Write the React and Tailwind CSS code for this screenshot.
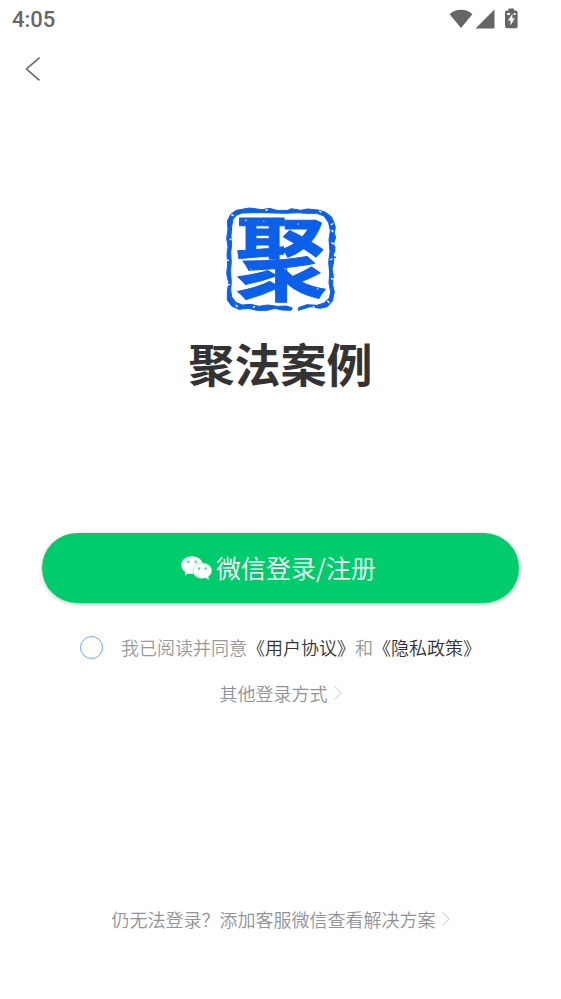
import React, { useState } from 'react';

const StatusIcons = () => (
  <svg className="w-[70px] h-6 text-[#666666]" viewBox="0 0 70 24" fill="currentColor" aria-hidden="true">
    {/* wifi */}
    <path d="M12 22 L0.6 8.2 C3.8 5.3 7.7 3.8 12 3.8 C16.3 3.8 20.2 5.3 23.4 8.2 Z" />
    {/* signal */}
    <path d="M45.5 3.5 V22.5 H26.5 Z" />
    {/* battery */}
    <path
      fillRule="evenodd"
      d="M59.5 2.5 H65 V4.5 H66.6 Q68.6 4.5 68.6 6.5 V20.3 Q68.6 22.3 66.6 22.3 H58 Q56 22.3 56 20.3 V6.5 Q56 4.5 58 4.5 H59.5 Z M63.4 8 L58.8 14.5 H61.5 V19.5 L65.9 12.3 H63.3 Z M58 7 V9 H60.5 L61.5 7 Z M64.8 7 L64.4 9 H66.6 V7 Z"
    />
  </svg>
);

const SealLogo = () => (
  <svg className="w-[130px] h-[120px] overflow-visible" viewBox="0 0 130 120" role="img" aria-label="聚法案例">
    <text
      x="65"
      y="93"
      textAnchor="middle"
      fontSize="92"
      fontWeight="700"
      fill="#0b5fe8"
      stroke="#0b5fe8"
      strokeWidth="1"
      strokeLinejoin="round"
      fontFamily="'Noto Sans CJK SC', sans-serif"
    >
      聚
    </text>
    <g transform="scale(0.33333)">
      {/* worn border of the stamp */}
      <path
        fill="#0b5fe8"
        stroke="#0b5fe8"
        strokeWidth="3"
        strokeLinejoin="round"
        fillRule="evenodd"
        d="M78 28 L100 24 L138 29 L160 25 L186 32 L216 31 L226 26 L254 31 L274 27 L306 30 L327 36 L346 50 L354 68 L358 82 L355 98 L359 113 L353 129 L357 151 L352 164 L353 186 L348 207 L352 228 L349 252 L355 275 L349 303 L334 320 L312 325 L283 320 L247 331 L247 323 L273 314 L303 316 L325 309 L340 294 L344 276 L339 249 L341 219 L338 187 L342 154 L339 119 L343 92 L338 68 L324 48 L303 40 L273 40 L246 38 L208 40 L177 39 L141 38 L106 38 L79 39 L62 45 L51 58 L47 79 L45 109 L47 133 L44 158 L46 187 L43 215 L46 244 L44 269 L47 290 L59 307 L79 315 L105 313 L129 319 L155 315 L184 319 L211 318 L229 324 L225 331 L197 330 L177 325 L153 331 L122 331 L98 325 L69 328 L47 318 L34 300 L34 275 L38 248 L32 221 L35 193 L33 164 L36 141 L32 115 L36 88 L34 63 L45 42 L61 31 Z"
      />
      {/* chips in the ink */}
      <g fill="none" stroke="#ffffff" strokeWidth="4" strokeLinecap="round">
        <path d="M47 44 L52 47 M42 117 L45 119 M34 180 L37 182 M37 255 L40 253 M60 316 L64 320 M112 322 L115 320 M292 320 L295 325 M335 303 L339 308 M346 236 L352 238 M344 179 L348 177 M348 128 L352 132 M347 91 L351 95 M346 74 L350 71 M311 34 L315 36 M150 31 L154 29" />
        <path
          strokeWidth="3"
          d="M88 62 L92 60 M143 64 L144 64 M246 72 L247 72 M105 207 L106 208 M207 205 L208 207 M304 266 L306 267"
        />
      </g>
      <g fill="#0b5fe8">
        <circle cx="357" cy="172" r="3" />
        <circle cx="357" cy="142" r="2" />
      </g>
    </g>
  </svg>
);

const WechatIcon = () => (
  <svg className="w-[31px] h-6" viewBox="0 0 31 24" aria-hidden="true">
    <path
      fill="#ffffff"
      d="M11 0.2 C5 0.2 0.3 4.1 0.3 9 C0.3 11.9 1.9 14.4 4.4 16.1 L3.7 19.6 L7.5 17.5 C8.7 17.8 9.8 18 11 18 C17.1 18 21.8 14 21.8 9 C21.8 4.1 17.1 0.2 11 0.2 Z"
    />
    <path
      fill="#ffffff"
      stroke="#7ee5b4"
      strokeWidth="0.7"
      d="M21 7 C15.8 7 11.9 10.3 11.9 14.7 C11.9 19 15.8 22.3 21 22.3 C22.2 22.3 23.3 22.1 24.3 21.8 L28 23.7 L27.2 20.5 C29.4 19.2 30.7 17.1 30.7 14.7 C30.7 10.3 26.3 7 21 7 Z"
    />
    <g fill="#5bdda0">
      <circle cx="7.4" cy="5.8" r="1.4" />
      <circle cx="14.8" cy="5.8" r="1.4" />
      <circle cx="18" cy="12.6" r="1.3" />
      <circle cx="24.6" cy="12.6" r="1.3" />
    </g>
  </svg>
);

const ArrowRight = () => (
  <svg className="w-2 h-4" viewBox="0 0 8 16" fill="none" stroke="#dcdcdf" strokeWidth="1.2" aria-hidden="true">
    <path d="M0.7 1.5 L7.2 8 L0.7 14.5" />
  </svg>
);

const App = () => {
  const [agreed, setAgreed] = useState(false);

  return (
    <div className="min-h-screen flex flex-col bg-white font-['Noto_Sans_CJK_SC',sans-serif] font-[350]">
      {/* Status bar */}
      <div className="h-10 pl-3 pr-[42px] flex items-center justify-between">
        <span className="font-[Roboto] font-medium text-[22px] leading-6 text-[#666666]">4:05</span>
        <div className="pb-1">
          <StatusIcons />
        </div>
      </div>

      <header className="h-14 px-3 pt-px flex items-center">
        <button type="button" aria-label="返回" className="w-[42px] h-10 flex items-center justify-center">
          <svg className="w-4 h-6" viewBox="0 0 16 24" fill="none" stroke="#666666" strokeWidth="1.6">
            <path d="M14.5 0.7 L1.5 12 L14.5 23.3" />
          </svg>
        </button>
      </header>

      <main className="flex-1 flex flex-col items-center px-[42px]">
        <div className="pt-26 flex flex-col items-center">
          <SealLogo />
          <h1 className="mt-3 text-[46px] leading-15 font-bold text-[#333333]">聚法案例</h1>
        </div>

        <button
          type="button"
          className="mt-[141px] pr-1 w-full h-[70px] rounded-full bg-[#00cc6c] text-white text-[25px] flex items-center justify-center gap-1 shadow-[0_1px_4px_rgba(0,0,0,0.25)]"
        >
          <WechatIcon />
          <span>微信登录/注册</span>
        </button>

        <div className="mt-8 flex items-center text-lg leading-6 text-[#999999]">
          <input
            id="agree"
            type="checkbox"
            checked={agreed}
            onChange={(e) => setAgreed(e.target.checked)}
            className="appearance-none w-[23px] h-[23px] mr-[18px] rounded-full border border-[#68a8f8] checked:bg-[#68a8f8]"
          />
          <label htmlFor="agree">我已阅读并同意</label>
          <a href="#terms" className="text-[#333333]">《用户协议》</a>
          <span>和</span>
          <a href="#privacy" className="text-[#333333]">《隐私政策》</a>
        </div>

        <a href="#other" className="mt-[22px] flex items-center gap-1.5 text-lg leading-6 text-[#909399]">
          其他登录方式
          <ArrowRight />
        </a>
      </main>

      <footer className="pb-17 flex justify-center">
        <a href="#help" className="flex items-center gap-1.5 text-lg leading-6 text-[#909399]">
          仍无法登录？添加客服微信查看解决方案
          <ArrowRight />
        </a>
      </footer>
    </div>
  );
};

export default App;
